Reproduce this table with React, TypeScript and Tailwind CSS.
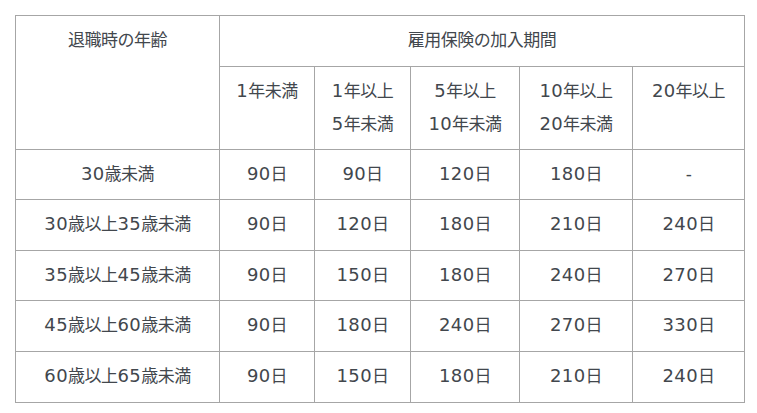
const periods = [
  ["1年未満"],
  ["1年以上", "5年未満"],
  ["5年以上", "10年未満"],
  ["10年以上", "20年未満"],
  ["20年以上"],
];

const rows: [string, string[]][] = [
  ["30歳未満", ["90日", "90日", "120日", "180日", "-"]],
  ["30歳以上35歳未満", ["90日", "120日", "180日", "210日", "240日"]],
  ["35歳以上45歳未満", ["90日", "150日", "180日", "240日", "270日"]],
  ["45歳以上60歳未満", ["90日", "180日", "240日", "270日", "330日"]],
  ["60歳以上65歳未満", ["90日", "150日", "180日", "210日", "240日"]],
];

const cell = "border border-[#a6a6a6] px-1 py-2 text-center leading-[33.6px]";

// digits in the original font are wide, so they are set a little larger
function Txt({ s }: { s: string }) {
  return (
    <>
      {s.split(/(\d+)/).map((part, i) =>
        /^\d+$/.test(part) ? (
          <span key={i} className="text-[18px] leading-none tracking-[0.4px]">
            {part}
          </span>
        ) : (
          <span key={i}>{part}</span>
        )
      )}
    </>
  );
}

export default function App() {
  return (
    <div
      className="min-h-[413px] w-[757px] bg-white pt-[15px] pl-[15px] text-[17px] tracking-[-0.5px] text-[#42474d]"
      style={{ fontFamily: '"DejaVu Sans", "Noto Sans CJK JP", sans-serif' }}
    >
      <table className="w-[729px] table-fixed border-collapse">
        <colgroup>
          <col className="w-[204px]" />
          <col className="w-[95px]" />
          <col className="w-[96px]" />
          <col className="w-[109px]" />
          <col className="w-[113px]" />
          <col className="w-[112px]" />
        </colgroup>
        <thead>
          <tr>
            <th rowSpan={2} className={`${cell} align-top font-normal`}>
              退職時の年齢
            </th>
            <th colSpan={5} className={`${cell} font-normal`}>
              雇用保険の加入期間
            </th>
          </tr>
          <tr>
            {periods.map((lines, i) => (
              <th key={i} className={`${cell} align-top font-normal !leading-[33px]`}>
                {lines.map((l) => (
                  <div key={l}>
                    <Txt s={l} />
                  </div>
                ))}
              </th>
            ))}
          </tr>
        </thead>
        <tbody>
          {rows.map(([age, days]) => (
            <tr key={age}>
              <td className={cell}>
                <Txt s={age} />
              </td>
              {days.map((d, i) => (
                <td key={i} className={cell}>
                  <Txt s={d} />
                </td>
              ))}
            </tr>
          ))}
        </tbody>
      </table>
    </div>
  );
}
